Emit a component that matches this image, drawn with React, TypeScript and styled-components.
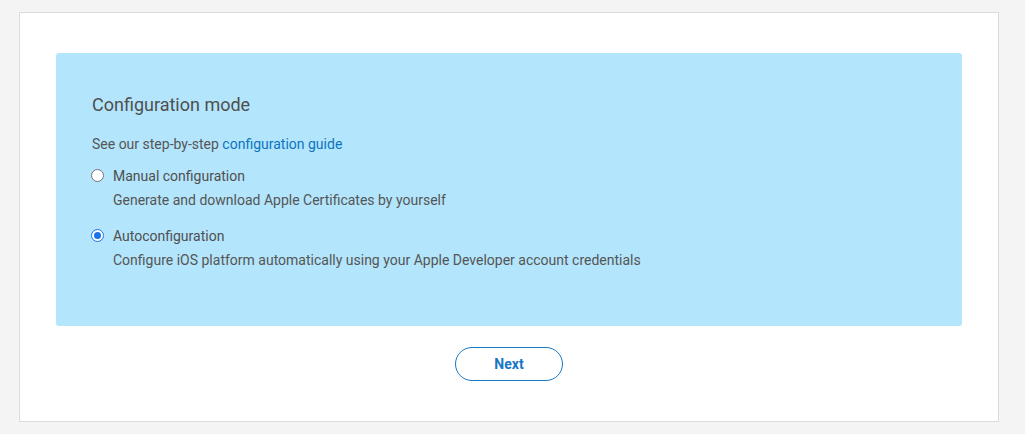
import React, { useState } from "react";
import styled, { createGlobalStyle } from "styled-components";

const GlobalStyle = createGlobalStyle`
  html, body {
    margin: 0;
    padding: 0;
    background: #f4f4f4;
    font-family: Roboto, "Liberation Sans", Arial, sans-serif;
  }
`;

const Page = styled.div`
  padding: 12px 26px 12px 19px;
`;

const Card = styled.div`
  background: #fff;
  border: 1px solid #dcdcdc;
  padding: 40px 36px 40px 36px;
  display: flex;
  flex-direction: column;
  align-items: center;
`;

const Panel = styled.div`
  align-self: stretch;
  background: #b3e5fc;
  border-radius: 3px;
  padding: 40px 36px 56px 36px;
  color: #555;
`;

const Title = styled.h2`
  margin: 0;
  font-size: 18px;
  line-height: 24px;
  font-weight: 400;
  color: #4f4f4f;
`;

const Guide = styled.p`
  margin: 17px 0 0 0;
  font-size: 14px;
  line-height: 20px;
`;

const Link = styled.a`
  color: #0d74bd;
  text-decoration: none;
`;

const Options = styled.div`
  display: flex;
  flex-direction: column;
  gap: 16px;
  margin-top: 12px;
`;

const Option = styled.label`
  display: grid;
  grid-template-columns: 21px 1fr;
  row-gap: 4px;
  cursor: pointer;
  font-size: 14px;
  line-height: 20px;
`;

const Radio = styled.span<{ $checked: boolean }>`
  width: 13px;
  height: 13px;
  margin: 3px 0 0 -1px;
  box-sizing: border-box;
  border-radius: 50%;
  background: #fff;
  border: ${(p) => (p.$checked ? "1px solid #1a73e8" : "1px solid #767676")};
  position: relative;
  &::after {
    content: "";
    display: ${(p) => (p.$checked ? "block" : "none")};
    position: absolute;
    inset: 2px;
    border-radius: 50%;
    background: #1a73e8;
  }
`;

const Label = styled.span`
  color: #4f4f4f;
`;

const Desc = styled.span`
  grid-column: 2;
  color: #555;
`;

const NextButton = styled.button`
  margin-top: 21px;
  width: 108px;
  height: 34px;
  border-radius: 17px;
  border: 1px solid #1877c2;
  background: #fff;
  color: #1877c2;
  font-family: Roboto, "Liberation Sans", Arial, sans-serif;
  font-size: 14px;
  font-weight: 700;
  cursor: pointer;
`;

const options = [
  {
    id: "manual",
    label: "Manual configuration",
    desc: "Generate and download Apple Certificates by yourself",
  },
  {
    id: "auto",
    label: "Autoconfiguration",
    desc: "Configure iOS platform automatically using your Apple Developer account credentials",
  },
];

export default function App() {
  const [mode, setMode] = useState("auto");
  return (
    <>
      <GlobalStyle />
      <Page>
        <Card>
          <Panel>
            <Title>Configuration mode</Title>
            <Guide>
              See our step-by-step <Link href="#">configuration guide</Link>
            </Guide>
            <Options>
              {options.map((o) => (
                <Option key={o.id} onClick={() => setMode(o.id)}>
                  <Radio $checked={mode === o.id} />
                  <Label>{o.label}</Label>
                  <Desc>{o.desc}</Desc>
                </Option>
              ))}
            </Options>
          </Panel>
          <NextButton>Next</NextButton>
        </Card>
      </Page>
    </>
  );
}
